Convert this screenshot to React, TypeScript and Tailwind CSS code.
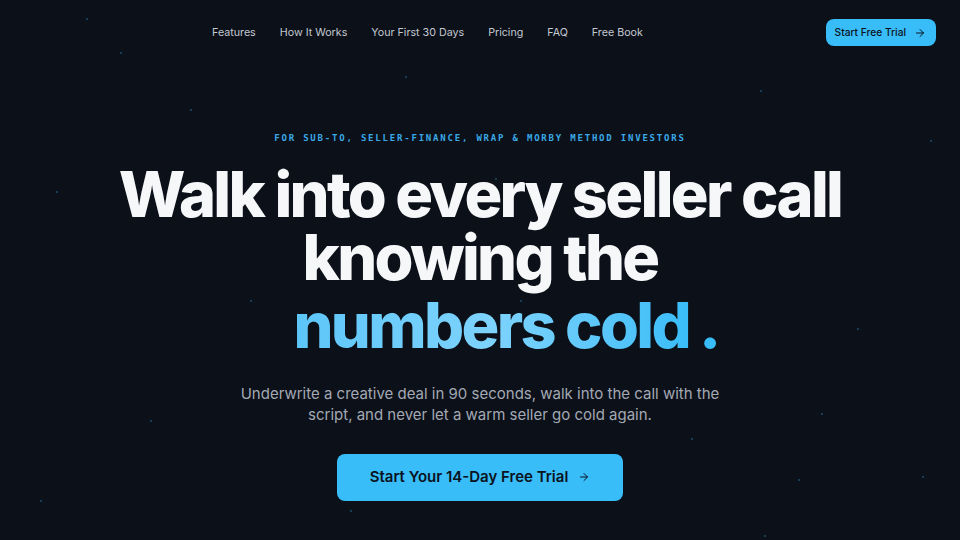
import React from 'react';
import { ArrowRight } from 'lucide-react';

const NAV = ['Features', 'How It Works', 'Your First 30 Days', 'Pricing', 'FAQ', 'Free Book'];

// faint star field behind the hero
const STARS: Array<[number, number]> = [
  [86, 18], [120, 52], [190, 109], [56, 191], [405, 76], [443, 195], [495, 178],
  [857, 328], [821, 413], [798, 479], [691, 438], [922, 476], [764, 535], [610, 250],
  [250, 300], [150, 420], [40, 500], [930, 140], [760, 90], [350, 510], [520, 300],
];

const sans = { fontFamily: 'Inter, "Noto Sans", sans-serif' };

export default function App() {
  return (
    <div className="relative h-[540px] w-[960px] overflow-hidden bg-[#0b1019] text-white" style={sans}>
      {STARS.map(([x, y], i) => (
        <span
          key={i}
          className="absolute h-[2px] w-[2px] rounded-full bg-[#1e4a6b]"
          style={{ left: x, top: y }}
        />
      ))}

      <header className="relative flex h-[65px] items-center pl-[212px] pr-[24px]">
        <nav className="flex items-center gap-[24px] pt-[2px] text-[10.7px] text-[#c3c8d1]">
          {NAV.map((n) => (
            <a key={n} href="#">{n}</a>
          ))}
        </nav>
        <button className="ml-auto flex h-[27px] items-center gap-[8px] rounded-lg bg-[#38bdf8] pl-[9px] pr-[10px] text-[10.2px] font-medium text-[#0b1220]">
          Start Free Trial
          <ArrowRight className="h-3 w-3" strokeWidth={2} />
        </button>
      </header>

      <main className="relative flex flex-col items-center">
        <p
          className="mt-[67px] text-[9px] font-bold tracking-[0.2em] text-[#3aa9e6]"
          style={{ fontFamily: '"DejaVu Sans Mono", "Liberation Mono", monospace' }}
        >
          FOR SUB-TO, SELLER-FINANCE, WRAP &amp; MORBY METHOD INVESTORS
        </p>

        <h1 className="mt-[17px] text-center text-[63px] font-extrabold leading-[63px] tracking-[-0.042em] text-[#f6f7f9]">
          <span className="block">Walk into every seller call</span>
          <span className="block">knowing the</span>
          <span className="mt-[5px] block pl-[52px]">
            <span className="bg-gradient-to-r from-[#5cc6f9] via-[#7dd3fc] to-[#38bdf8] bg-clip-text text-transparent">
              numbers cold
            </span>
            <span className="ml-[10px] text-[#38bdf8]">.</span>
          </span>
        </h1>

        <p className="mt-[26px] w-[500px] text-center text-[15px] leading-[21px] text-[#a3a9b4]">
          Underwrite a creative deal in 90 seconds, walk into the call with the script, and never let a warm seller go cold again.
        </p>

        <button className="mt-[29px] flex h-[47px] w-[286px] items-center justify-center gap-[10px] rounded-lg bg-[#38bdf8] text-[15px] font-semibold text-[#0b1220]">
          Start Your 14-Day Free Trial
          <ArrowRight className="h-3 w-3" strokeWidth={2} />
        </button>
      </main>
    </div>
  );
}
